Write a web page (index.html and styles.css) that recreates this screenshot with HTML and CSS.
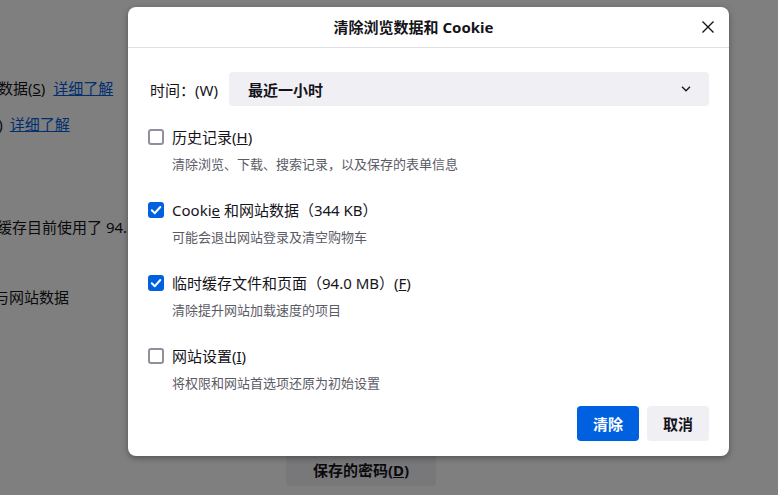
FILE: index.html
```html
<!DOCTYPE html>
<html lang="zh-CN">
<head>
<meta charset="utf-8">
<title>清除浏览数据和 Cookie</title>
<link rel="stylesheet" href="styles.css">
</head>
<body>
<div class="page">
  <div class="bg-line l1"><span>数据(<u>S</u>)</span><a class="link">详细了解</a></div>
  <div class="bg-line l2"><span>(O)</span><a class="link">详细了解</a></div>
  <div class="bg-line l3"><span>缓存目前使用了 94.5 MB 磁盘空间</span></div>
  <div class="bg-line l4"><span>与网站数据</span></div>
  <button class="bg-btn">保存的密码(<u>D</u>)</button>
</div>
<div class="overlay"></div>
<div class="dialog">
  <div class="dlg-head">
    <div class="dlg-title">清除浏览数据和 Cookie</div>
    <button class="close-btn" aria-label="关闭">
      <svg width="12" height="12" viewBox="0 0 12 12"><path d="M0.5 0.5 L11.5 11.5 M11.5 0.5 L0.5 11.5" stroke="#15141a" stroke-width="1.4" fill="none"/></svg>
    </button>
  </div>
  <div class="dlg-body">
    <div class="time-row">
      <span class="time-label">时间：(W)</span>
      <div class="select">
        <span>最近一小时</span>
        <svg width="10" height="6" viewBox="0 0 10 6"><path d="M1 0.8 L5 4.8 L9 0.8" stroke="#15141a" stroke-width="1.3" fill="none"/></svg>
      </div>
    </div>
    <div class="items">
      <div class="item">
        <div class="label-row"><span class="cb"></span><span>历史记录(<u>H</u>)</span></div>
        <div class="desc">清除浏览、下载、搜索记录，以及保存的表单信息</div>
      </div>
      <div class="item">
        <div class="label-row"><span class="cb checked"><svg width="16" height="16" viewBox="0 0 16 16"><path d="M3.8 8.3 L6.8 11.2 L12.3 5" stroke="#fff" stroke-width="2" fill="none" stroke-linecap="round" stroke-linejoin="round"/></svg></span><span>Cooki<u>e</u> 和网站数据（344 KB）</span></div>
        <div class="desc">可能会退出网站登录及清空购物车</div>
      </div>
      <div class="item">
        <div class="label-row"><span class="cb checked"><svg width="16" height="16" viewBox="0 0 16 16"><path d="M3.8 8.3 L6.8 11.2 L12.3 5" stroke="#fff" stroke-width="2" fill="none" stroke-linecap="round" stroke-linejoin="round"/></svg></span><span>临时缓存文件和页面（94.0 MB）(<u>F</u>)</span></div>
        <div class="desc">清除提升网站加载速度的项目</div>
      </div>
      <div class="item">
        <div class="label-row"><span class="cb"></span><span>网站设置(<u>I</u>)</span></div>
        <div class="desc">将权限和网站首选项还原为初始设置</div>
      </div>
    </div>
    <div class="actions">
      <button class="btn primary">清除</button>
      <button class="btn">取消</button>
    </div>
  </div>
</div>
</body>
</html>
```

FILE: styles.css
```css
* { box-sizing: border-box; }
html, body {
  margin: 0;
  width: 778px;
  height: 495px;
  overflow: hidden;
}
body {
  font-family: "Noto Sans", "Noto Sans CJK SC", sans-serif;
  font-size: 15px;
  color: #15141a;
  background: #ffffff;
  position: relative;
}
button { font-family: inherit; }

.page {
  padding-top: 77px;
  display: flex;
  flex-direction: column;
  align-items: flex-start;
}
.bg-line {
  display: flex;
  gap: 8px;
  line-height: 22px;
  white-space: nowrap;
}
.link {
  color: #0061e0;
  text-decoration: underline;
}
.l1 { margin-left: -2px; }
.l2 { margin-left: -18px; margin-top: 14px; gap: 7px; }
.l3 { margin-left: -3px; margin-top: 81px; }
.l4 { margin-left: -6px; margin-top: 48px; }
.bg-btn {
  margin-top: 144px;
  margin-left: 286px;
  width: 150px;
  height: 34px;
  border: none;
  border-radius: 4px;
  background: #f0f0f4;
  color: #15141a;
  font-size: 15px;
  font-weight: 700;
  padding: 0;
}

.overlay {
  position: absolute;
  inset: 0;
  background: rgba(0, 0, 0, 0.5);
}

.dialog {
  position: absolute;
  left: 128px;
  top: 7px;
  width: 601px;
  background: #fff;
  border-radius: 8px;
  box-shadow: 0 2px 6px rgba(0, 0, 0, 0.35);
  display: flex;
  flex-direction: column;
}
.dlg-head {
  height: 41px;
  border-bottom: 1px solid #dedee3;
  display: flex;
  align-items: center;
  padding: 0 6px 0 20px;
}
.dlg-title {
  flex: 1;
  text-align: center;
  font-weight: 700;
  font-size: 15px;
  padding-right: 14px;
  padding-bottom: 1px;
}
.close-btn {
  width: 30px;
  height: 30px;
  border: none;
  background: transparent;
  padding: 0;
  display: flex;
  align-items: center;
  justify-content: center;
}
.dlg-body {
  padding: 24px 20px 15px 20px;
  display: flex;
  flex-direction: column;
}
.time-row {
  display: flex;
  align-items: center;
  height: 34px;
}
.time-label {
  width: 81px;
  padding-left: 2px;
  white-space: nowrap;
}
.select {
  flex: 1;
  height: 34px;
  background: #f0f0f4;
  border-radius: 4px;
  display: flex;
  align-items: center;
  justify-content: space-between;
  padding: 0 18px 0 19px;
  font-weight: 700;
}
.items {
  margin-top: 20px;
  display: flex;
  flex-direction: column;
  gap: 25px;
}
.item {
  display: flex;
  flex-direction: column;
  gap: 6px;
}
.label-row {
  display: flex;
  align-items: center;
  gap: 8px;
  line-height: 22px;
  height: 22px;
  white-space: nowrap;
}
.cb {
  width: 16px;
  height: 16px;
  border: 2px solid #8f8f9d;
  border-radius: 3px;
  background: #fff;
  flex: none;
  position: relative;
}
.cb.checked {
  border: none;
  background: #0061e0;
}
.cb svg { display: block; }
.desc {
  padding-left: 24px;
  font-size: 13px;
  line-height: 20px;
  color: #5b5b66;
}
.actions {
  margin-top: 13px;
  display: flex;
  justify-content: flex-end;
  gap: 8px;
}
.btn {
  width: 62px;
  height: 35px;
  border: none;
  border-radius: 4px;
  background: #f0f0f4;
  color: #15141a;
  font-size: 15px;
  font-weight: 700;
  padding: 0;
}
.btn.primary {
  background: #0061e0;
  color: #fff;
}
```
